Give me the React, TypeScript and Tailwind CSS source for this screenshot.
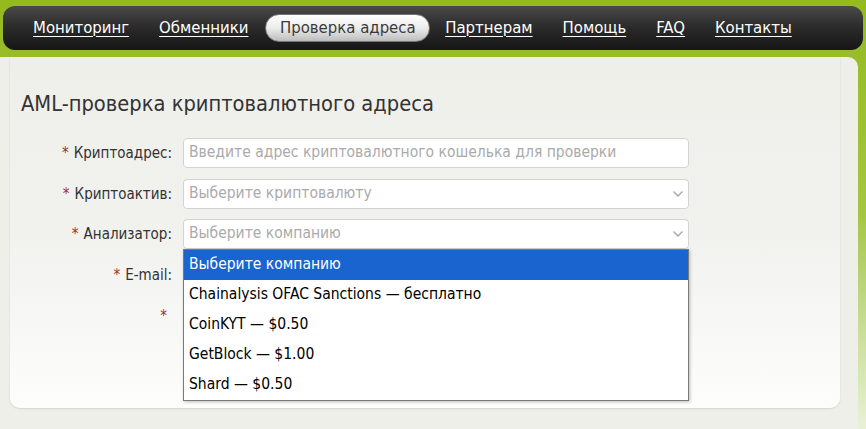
import React from 'react';

const navItems = ['Мониторинг', 'Обменники', 'Проверка адреса', 'Партнерам', 'Помощь', 'FAQ', 'Контакты'];

const options = [
  'Выберите компанию',
  'Chainalysis OFAC Sanctions — бесплатно',
  'CoinKYT — $0.50',
  'GetBlock — $1.00',
  'Shard — $0.50',
];

const Chevron = () => (
  <svg width="12" height="8" viewBox="0 0 12 8" className="text-[#a5a5a5]">
    <path d="M1.5 1.5 L6 6 L10.5 1.5" fill="none" stroke="currentColor" strokeWidth="1.4" />
  </svg>
);

const Star = () => <span className="text-[#9b3232] mr-[5px]">*</span>;

const App: React.FC = () => {
  return (
    <div
      className="w-[866px] h-[429px] overflow-hidden bg-gradient-to-b from-[#94ba1f] via-[#a4c640] to-[#eaf1d6] flex flex-col"
      style={{ fontFamily: '"DejaVu Sans Condensed", "DejaVu Sans", Verdana, sans-serif' }}
    >
      {/* top menu */}
      <nav className="mx-[3px] mt-[6px] h-[44px] rounded-[12px] bg-gradient-to-b from-[#4a4a4a] via-[#2a2a2a] to-[#161616] flex items-center pl-[30px] gap-[30px] text-[16.6px]">
        {navItems.map((item) =>
          item === 'Проверка адреса' ? (
            <span
              key={item}
              className="-ml-[13px] -mr-[15px] h-[28px] px-[13.5px] flex items-center rounded-full bg-gradient-to-b from-white via-[#ececec] to-[#bdbdbd] text-[#3a3a3a] border border-[#777]"
            >
              {item}
            </span>
          ) : (
            <a key={item} href="#" className="text-white underline underline-offset-[3px] decoration-1">
              {item}
            </a>
          )
        )}
      </nav>

      <div className="flex flex-1 mt-[7px]">
        <main className="flex-1 bg-[#efefea] rounded-tr-[10px] mr-[8px]">
          <div className="relative ml-[10px] w-[830px] h-[351px] rounded-b-[10px] bg-gradient-to-b from-[#efefea] via-[#f1f1ee] to-[#fdfdfc] shadow-[0_1px_2px_rgba(0,0,0,0.12)] pl-[11px] pt-[32px]">
            <h1 className="text-[21.7px] leading-[30px] text-[#333]">AML-проверка криптовалютного адреса</h1>

            <div className="mt-[19px] grid grid-cols-[151px_506px] gap-x-[11px] gap-y-[11px] items-center text-[15px] text-[#333]">
              <label className="text-right"><Star />Криптоадрес:</label>
              <div className="h-[30px] rounded-[4px] border border-[#d3d3d3] bg-white flex items-center px-[5px] text-[#aaa] text-[15.5px]">
                Введите адрес криптовалютного кошелька для проверки
              </div>

              <label className="text-right"><Star />Криптоактив:</label>
              <div className="h-[30px] rounded-[4px] border border-[#d3d3d3] bg-white flex items-center justify-between pl-[5px] pr-[4px] text-[#aaa] text-[15.5px]">
                Выберите криптовалюту
                <Chevron />
              </div>

              <label className="text-right -mt-[1px]"><Star />Анализатор:</label>
              <div className="relative -mt-[1px] h-[30px] rounded-[4px] border border-[#d3d3d3] bg-white flex items-center justify-between pl-[5px] pr-[4px] text-[#aaa] text-[15.5px]">
                Выберите компанию
                <Chevron />
              </div>

              <label className="text-right"><Star />E-mail:</label>
              <div className="h-[30px] rounded-[4px] border border-[#c98f7d] bg-white" />

              <label className="text-right"><Star /></label>
              <div className="h-[30px] rounded-[4px] border border-[#d3d3d3] bg-white" />

              <div />
              <button className="w-[140px] h-[30px] rounded-[4px] bg-[#7c8a3a] border border-[#5f6d22]" />
            </div>

            {/* opened select list */}
            <ul className="absolute left-[173px] top-[192px] w-[506px] border border-[#7a7a7a] bg-white text-[15.5px] text-black shadow-[1px_1px_3px_rgba(0,0,0,0.25)]">
              {options.map((o, i) => (
                <li
                  key={o}
                  className={`h-[30px] flex items-center pl-[5px] ${i === 0 ? 'bg-[#1a64cf] text-white' : ''}`}
                >
                  {o}
                </li>
              ))}
            </ul>
          </div>
        </main>
      </div>
    </div>
  );
};

export default App;
